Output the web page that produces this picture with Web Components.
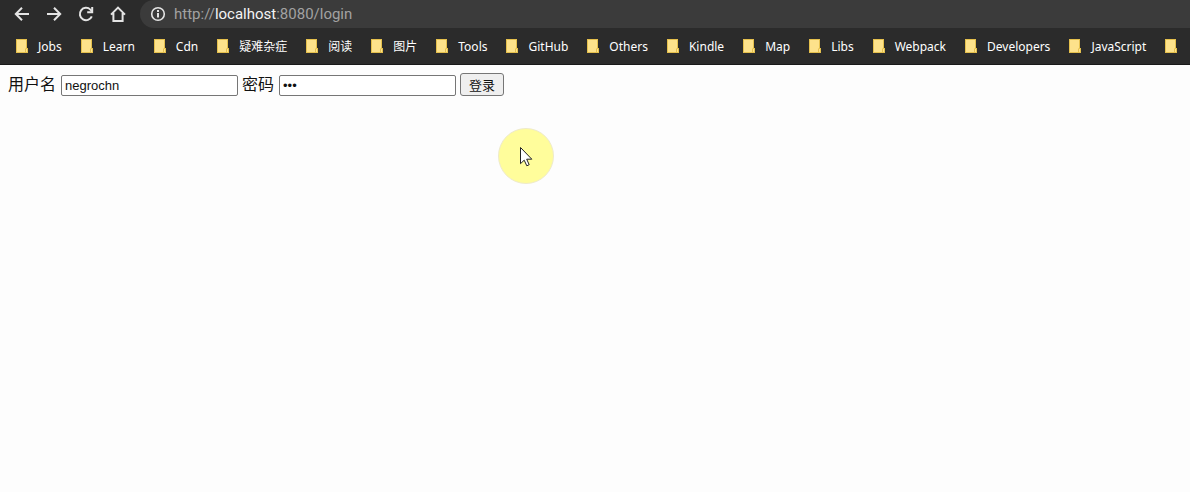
<!DOCTYPE html>
<html lang="zh-CN">
<head>
<meta charset="utf-8">
<title>localhost:8080/login</title>
<style>
html { background: #fdfdfd; }
body { margin: 0; }
</style>
</head>
<body>
<browser-window></browser-window>
<script>
class NavButton extends HTMLElement {
  connectedCallback() {
    const icons = {
      back: '<path d="M15 8H2M8 1.8 1.8 8 8 14.2"/>',
      forward: '<path d="M1 8h13M8 1.8 14.2 8 8 14.2"/>',
      reload: '<path d="M13.8 10.4A6.2 6.2 0 1 1 12.4 3.6L14 5.4"/><path d="M14.2 1v5.2H9.2"/>',
      home: '<path d="M1 8.600 8 1.600 15 8.600M3.400 7v8h9.200V7"/>'
    };
    this.attachShadow({ mode: 'open' }).innerHTML = `
      <style>
        :host { display: block; }
        button { display: flex; align-items: center; justify-content: center; width: 32px; height: 28px; padding: 0; border: 0; background: none; }
        svg { width: 16px; height: 16px; fill: none; stroke: #e4e4e4; stroke-width: 2; }
      </style>
      <button type="button" aria-label="${this.getAttribute('label')}"><svg viewBox="0 0 16 16">${icons[this.getAttribute('icon')]}</svg></button>`;
  }
}
customElements.define('nav-button', NavButton);

class AddressBar extends HTMLElement {
  connectedCallback() {
    this.attachShadow({ mode: 'open' }).innerHTML = `
      <style>
        :host { display: flex; align-items: center; flex: 1; gap: 8px; height: 28px; padding-left: 10px; box-sizing: border-box; border-radius: 14px 0 0 14px; background: #3b3b3b; color: #a2a2a2; font: 15px/20px Roboto, sans-serif; white-space: nowrap; }
        svg { width: 16px; height: 16px; fill: none; stroke: #e4e4e4; stroke-width: 2; }
        ::slotted(b) { font-weight: 400; color: #f4f4f4; }
      </style>
      <svg viewBox="0 0 16 16"><circle cx="8" cy="8" r="6.3" stroke-width="1.6"/><path d="M8 7v4.5M8 4v2"/></svg>
      <span><slot></slot></span>`;
  }
}
customElements.define('address-bar', AddressBar);

class BookmarkFolder extends HTMLElement {
  connectedCallback() {
    this.attachShadow({ mode: 'open' }).innerHTML = `
      <style>
        :host { display: block; flex: none; }
        a { display: flex; align-items: center; gap: 10px; color: #fff; font: 12px/16px "Noto Sans", "Noto Sans CJK SC", sans-serif; text-decoration: none; white-space: nowrap; }
        svg { width: 12px; height: 14px; flex: none; }
        span { padding-top: 2px; }
      </style>
      <a href="#"><svg viewBox="0 0 12 14"><path d="M0 0h11v9h1v5H0z" fill="#e5c04d"/><path d="M1 1h9v8.500h-1V13H1z" fill="#fde28b"/><path d="M10 10h1v3h-1z" fill="#fde28b"/></svg><span><slot></slot></span></a>`;
  }
}
customElements.define('bookmark-folder', BookmarkFolder);

class BrowserToolbar extends HTMLElement {
  connectedCallback() {
    const names = ['Jobs','Learn','Cdn','疑难杂症','阅读','图片','Tools','GitHub','Others','Kindle','Map','Libs','Webpack','Developers','JavaScript',''];
    this.attachShadow({ mode: 'open' }).innerHTML = `
      <style>
        :host { display: block; background: #2b2b2b; border-bottom: 1px solid #191919; overflow: hidden; }
        .navigation { display: flex; gap: 6px; padding-left: 6px; }
        .buttons { display: flex; width: 128px; }
        .bookmarks { display: flex; align-items: center; gap: 19px; height: 36px; padding-left: 16px; }
      </style>
      <div class="navigation">
        <div class="buttons"><nav-button icon="back" label="返回"></nav-button><nav-button icon="forward" label="前进"></nav-button><nav-button icon="reload" label="刷新"></nav-button><nav-button icon="home" label="主页"></nav-button></div>
        <address-bar>http://<b>localhost</b>:8080/login</address-bar>
      </div>
      <nav class="bookmarks">${names.map(n => `<bookmark-folder>${n}</bookmark-folder>`).join('')}</nav>`;
  }
}
customElements.define('browser-toolbar', BrowserToolbar);

class LoginForm extends HTMLElement {
  connectedCallback() {
    this.attachShadow({ mode: 'open' }).innerHTML = `
      <style>
        :host { display: block; padding: 8px; }
        form { display: flex; align-items: flex-end; gap: 4px; color: #111; font: 16px/21px "Noto Sans CJK SC", sans-serif; }
        label { align-self: flex-start; padding-right: 1px; }
        input { box-sizing: border-box; width: 177px; height: 21px; padding: 1px 3px; border: 1px solid #767676; border-radius: 2px; background: #fff; color: #111; font: 13px/16px "Liberation Sans", sans-serif; outline: 0; }
        button { box-sizing: border-box; width: 44px; height: 23px; padding: 0; border: 1px solid #767676; border-radius: 3px; background: #efefef; color: #111; font: 13px/20px "Noto Sans CJK SC", sans-serif; }
      </style>
      <form>
        <label for="username">用户名</label><input id="username" type="text" value="negrochn">
        <label for="password">密码</label><input id="password" type="password" value="123">
        <button type="button">登录</button>
      </form>`;
  }
}
customElements.define('login-form', LoginForm);

class PointerHighlight extends HTMLElement {
  connectedCallback() {
    this.attachShadow({ mode: 'open' }).innerHTML = `
      <style>
        :host { display: block; position: absolute; left: 498px; top: 128px; pointer-events: none; }
        svg { display: block; width: 56px; height: 56px; }
      </style>
      <svg viewBox="0 0 56 56"><circle cx="28" cy="28" r="27.500" fill="#fffd9b" stroke="#eeeacb"/><path d="M22.500 19.500v16.200l3.700-3.500 2.600 5.600 2.400-1.100-2.500-5.500h5.100z" fill="#fff" stroke="#222"/></svg>`;
  }
}
customElements.define('pointer-highlight', PointerHighlight);

class BrowserWindow extends HTMLElement {
  connectedCallback() {
    this.attachShadow({ mode: 'open' }).innerHTML = `
      <style>:host { display: block; position: relative; min-height: 100vh; }</style>
      <browser-toolbar></browser-toolbar>
      <main><login-form></login-form></main>
      <pointer-highlight></pointer-highlight>`;
  }
}
customElements.define('browser-window', BrowserWindow);
</script>
</body>
</html>
